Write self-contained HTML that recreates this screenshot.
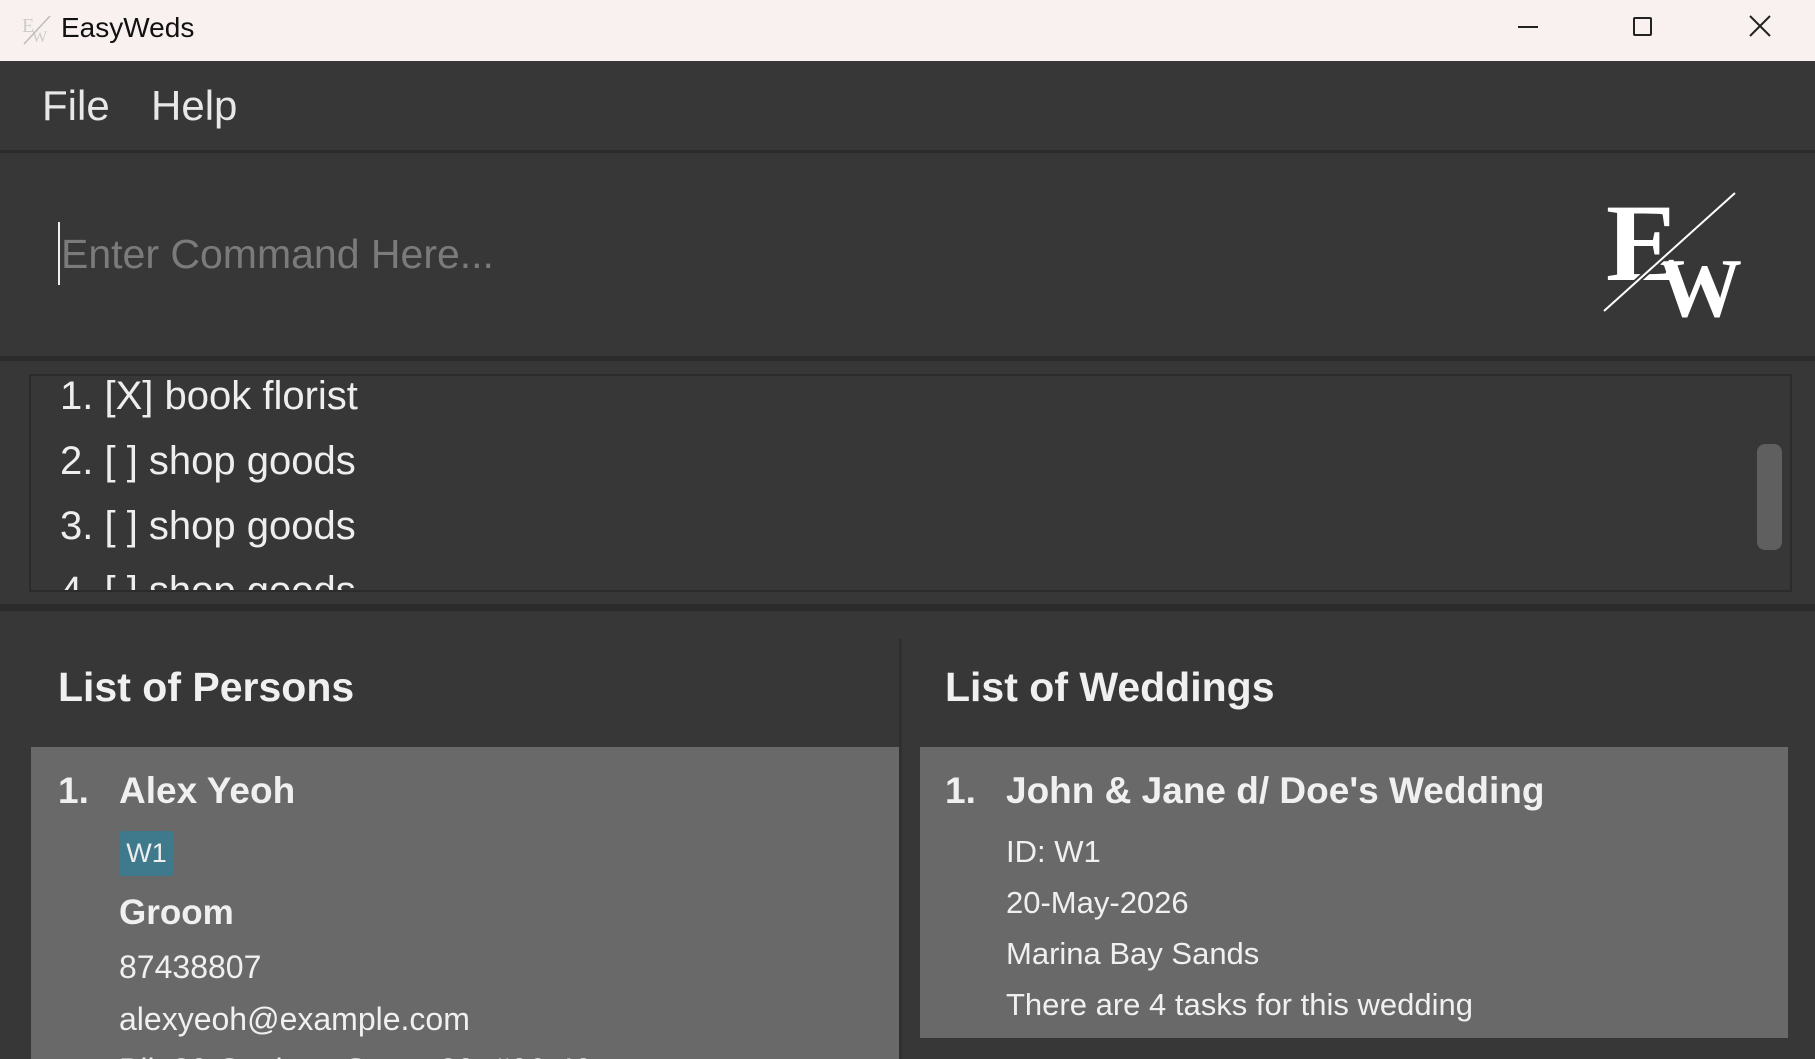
<!DOCTYPE html>
<html style="overflow:hidden;width:1815px;height:1059px"><head><meta charset="utf-8"><style>
*{margin:0;padding:0;box-sizing:border-box}
body{width:1815px;height:1059px;overflow:hidden;background:#373737;font-family:"Liberation Sans",sans-serif;position:relative;color:#fff}
.a{position:absolute;white-space:nowrap}
.title{left:0;top:0;width:1815px;height:61px;background:#f9f1ef}
.menu{left:0;top:61px;width:1815px;height:89px;background:#373737}
.sep{left:0;width:1815px;background:#2b2b2b}
.light{font-weight:300;color:#e8e8e8}
.card{background:#696969;overflow:hidden}
.b{font-weight:bold;color:#f0f0f0}
.n{color:#f0f0f0}
</style></head><body>
<div class="a title"></div>
<svg class="a" style="left:20px;top:12px" width="34" height="34" viewBox="0 0 34 34"><text x="2" y="20" font-family="Liberation Serif" font-size="20" fill="#ccc">E</text><text x="12" y="30" font-family="Liberation Serif" font-size="16" fill="#ccc">W</text><line x1="4" y1="32" x2="30" y2="4" stroke="#bbb" stroke-width="1.5"/></svg>
<div class="a" style="left:61px;top:12px;font-size:28px;color:#111">EasyWeds</div>
<div class="a" style="left:1518px;top:26px;width:20px;height:2px;background:#222"></div>
<div class="a" style="left:1633px;top:17px;width:19px;height:19px;border:2px solid #222;border-radius:2px"></div>
<svg class="a" style="left:1749px;top:15px" width="22" height="22"><path d="M1 1L21 21M21 1L1 21" stroke="#222" stroke-width="2"/></svg>
<div class="a menu"></div>
<div class="a light" style="left:42px;top:82px;font-size:42px">File</div>
<div class="a light" style="left:151px;top:82px;font-size:42px">Help</div>
<div class="a sep" style="top:150px;height:3px"></div>
<div class="a" style="left:58px;top:222px;width:2px;height:63px;background:#eee"></div>
<div class="a" style="left:61px;top:231px;font-size:41px;color:#7b7b7b;font-weight:300">Enter Command Here...</div>
<svg class="a" style="left:1600px;top:188px" width="160" height="135" viewBox="0 0 160 135">
<text x="6" y="92" font-family="Liberation Serif" font-weight="bold" font-size="110" fill="#fff">E</text>
<text x="58" y="128" font-family="Liberation Serif" font-weight="bold" font-size="84" fill="#fff">W</text>
<line x1="4" y1="123" x2="135" y2="5" stroke="#373737" stroke-width="6"/>
<line x1="4" y1="123" x2="135" y2="5" stroke="#fff" stroke-width="2"/>
</svg>
<div class="a sep" style="top:356px;height:5px"></div>
<div class="a" style="left:29px;top:374px;width:1763px;height:218px;border:2px solid #2b2b2b;overflow:hidden">
 <div style="position:absolute;left:29px;top:-12px;font-size:40px;font-weight:300;color:#eee;line-height:65px">1. [X] book florist<br>2. [ ] shop goods<br>3. [ ] shop goods<br>4. [ ] shop goods</div>
 <div style="position:absolute;left:1726px;top:68px;width:25px;height:106px;background:#5f5f5f;border-radius:8px"></div>
</div>
<div class="a sep" style="top:604px;height:7px"></div>
<div class="a" style="left:899px;top:639px;width:3px;height:420px;background:#2f2f2f"></div>
<div class="a b" style="left:58px;top:664px;font-size:41px">List of Persons</div>
<div class="a b" style="left:945px;top:664px;font-size:41px">List of Weddings</div>
<div class="a card" style="left:31px;top:747px;width:868px;height:312px">
<div class="a b" style="left:27px;top:23px;font-size:37px">1.</div>
<div class="a b" style="left:88px;top:23px;font-size:37px">Alex Yeoh</div>
<div class="a" style="left:88px;top:84px;width:55px;height:45px;background:#3f7a8c;border-radius:3px;font-size:27px;color:#eee;text-align:center;line-height:45px">W1</div>
<div class="a b" style="left:88px;top:146px;font-size:35px">Groom</div>
<div class="a n" style="left:88px;top:202px;font-size:32px">87438807</div>
<div class="a n" style="left:88px;top:254px;font-size:32px">alexyeoh@example.com</div>
<div class="a n" style="left:88px;top:305px;font-size:32px">Blk 30 Geylang Street 29, #06-40</div>
</div>
<div class="a card" style="left:920px;top:747px;width:868px;height:291px"></div>
<div class="a b" style="left:945px;top:770px;font-size:37px">1.</div>
<div class="a b" style="left:1006px;top:770px;font-size:37px">John &amp; Jane d/ Doe's Wedding</div>
<div class="a n" style="left:1006px;top:834px;font-size:31px">ID: W1</div>
<div class="a n" style="left:1006px;top:885px;font-size:31px">20-May-2026</div>
<div class="a n" style="left:1006px;top:936px;font-size:31px">Marina Bay Sands</div>
<div class="a n" style="left:1006px;top:987px;font-size:31px">There are 4 tasks for this wedding</div>
</body></html>
